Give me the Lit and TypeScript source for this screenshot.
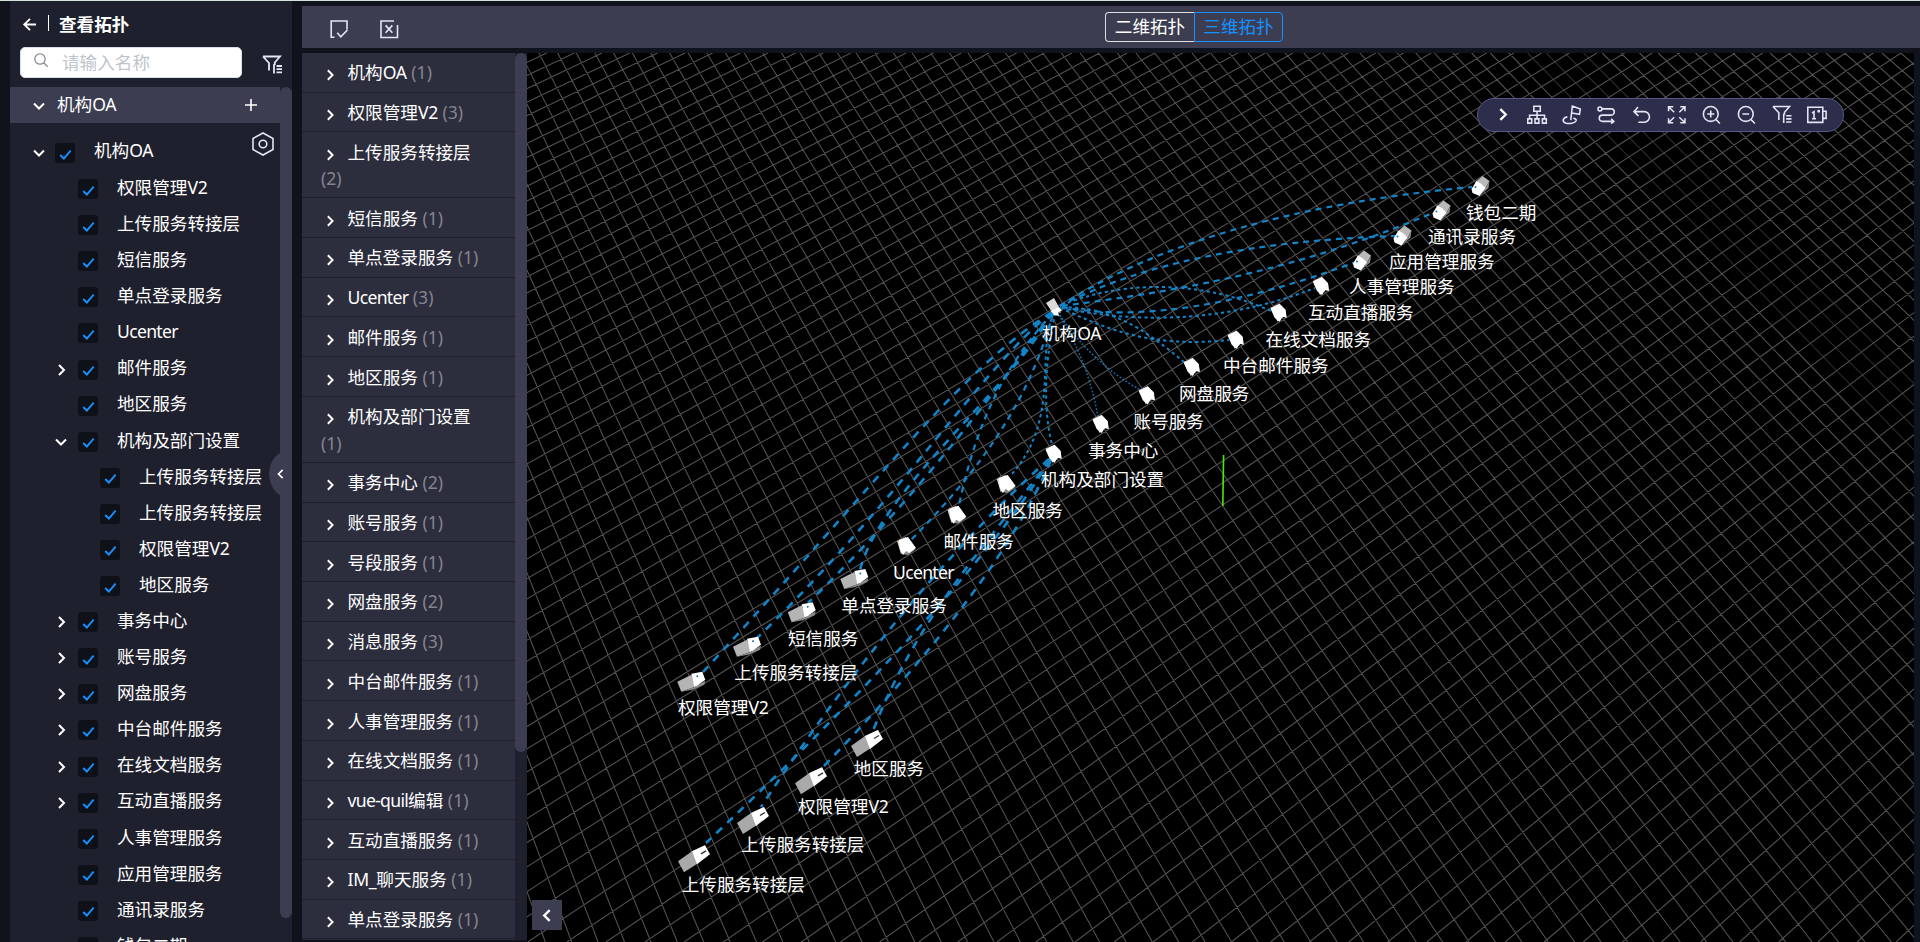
import { LitElement, html, svg, css } from "lit";

const LATIN = /([A-Za-z0-9_\-]+)/;
const label = (t: string) =>
  t.split(LATIN).filter(Boolean).map((p) =>
    LATIN.test(p) ? html`<span class=${/[a-z]/.test(p) ? "lat low" : "lat"}>${p}</span>` : p);
const svgLabel = (t: string) =>
  t.split(LATIN).filter(Boolean).map((p) =>
    LATIN.test(p) ? svg`<tspan class=${/[a-z]/.test(p) ? "low" : "lat"}>${p}</tspan>` : svg`<tspan>${p}</tspan>`);

type Row = { name: string; level: 0 | 1 | 2; open?: boolean };
const TREE: Row[] = [
  { name: "权限管理V2", level: 1 },
  { name: "上传服务转接层", level: 1 },
  { name: "短信服务", level: 1 },
  { name: "单点登录服务", level: 1 },
  { name: "Ucenter", level: 1 },
  { name: "邮件服务", level: 1, open: false },
  { name: "地区服务", level: 1 },
  { name: "机构及部门设置", level: 1, open: true },
  { name: "上传服务转接层", level: 2 },
  { name: "上传服务转接层", level: 2 },
  { name: "权限管理V2", level: 2 },
  { name: "地区服务", level: 2 },
  { name: "事务中心", level: 1, open: false },
  { name: "账号服务", level: 1, open: false },
  { name: "网盘服务", level: 1, open: false },
  { name: "中台邮件服务", level: 1, open: false },
  { name: "在线文档服务", level: 1, open: false },
  { name: "互动直播服务", level: 1, open: false },
  { name: "人事管理服务", level: 1 },
  { name: "应用管理服务", level: 1 },
  { name: "通讯录服务", level: 1 },
  { name: "钱包二期", level: 1 },
];

const GROUPS: [string, number][] = [
  ["机构OA", 1], ["权限管理V2", 3], ["上传服务转接层", 2], ["短信服务", 1],
  ["单点登录服务", 1], ["Ucenter", 3], ["邮件服务", 1], ["地区服务", 1],
  ["机构及部门设置", 1], ["事务中心", 2], ["账号服务", 1], ["号段服务", 1],
  ["网盘服务", 2], ["消息服务", 3], ["中台邮件服务", 1], ["人事管理服务", 1],
  ["在线文档服务", 1], ["vue-quil编辑", 1], ["互动直播服务", 1],
  ["IM_聊天服务", 1], ["单点登录服务", 1],
];

/* Perspective ground grid: both line families share the horizon. */
const VIEW = { x: 527, y: 53, w: 1387, h: 889 };
const CAM = { horizon: -2089.67782, scale: 138.5852, yaw: 0.59378, a0: -79.78982, b0: -91.36246, cx: 1218.54475, focal: 479.55719 };
function gridPaths() {
  const d = Math.hypot(CAM.focal, 497.5 - CAM.horizon);
  const va = CAM.cx - d * Math.tan(CAM.yaw);
  const vb = CAM.cx + d / Math.tan(CAM.yaw);
  const p = CAM.scale * Math.cos(CAM.yaw);
  const s = -CAM.scale * Math.sin(CAM.yaw);
  const y0 = VIEW.y, y1 = VIEW.y + VIEW.h;
  const at = (v: number, k: number, o: number, q: number, y: number) => v + ((k - o) * (y - CAM.horizon)) / q;
  let main = "", faint = "";
  for (let k = -80; k < 130; k++) {
    const seg = `M${at(va, k, CAM.a0, p, y0).toFixed(1)} ${y0}L${at(va, k, CAM.a0, p, y1).toFixed(1)} ${y1}`;
    if (k >= 32 && k <= 35) faint += seg;
    else main += seg;
    main += `M${at(vb, k, CAM.b0, s, y0).toFixed(1)} ${y0}L${at(vb, k, CAM.b0, s, y1).toFixed(1)} ${y1}`;
  }
  return { main, faint };
}
const GRID = gridPaths();

type Shape = { gray: string; mid: string; white: string; shade: string };
const SHAPES: Record<string, Shape> = {
  low: { gray: "-16,3 -2,-7 4,5 -10,14", mid: "-2,-7 11,-13 12,-9 0,-2", white: "-2,-7 11,-13 16,-4 3,6", shade: "#a9a9a9" },
  left: { gray: "-14,0 0,-7 4,5 -10,10", mid: "-10,10 4,5 14,-1 13,3 1,8", white: "0,-8 11,-10 14,-2 6,4 3,5", shade: "#b4b4b4" },
  mid: { gray: "-9,-5 0,-9 3,4 -5,8", mid: "-5,8 3,4 10,3 2,9", white: "-7,-6 2,-9 10,2 3,7 0,5 -3,9 -6,3", shade: "#d6d6d6" },
  steep: { gray: "-8,-5 1,-9 6,3 -1,9", mid: "2,-8 7,-2 8,5 5,4", white: "-8,-4 1,-9 7,-3 8,5 4,4 1,9 -4,5", shade: "#e8e8e8" },
  right: { gray: "-5,-4 2,-10 9,-5 4,4 -2,3", mid: "4,4 9,-5 8,2 -1,10", white: "-9,3 -4,-5 1,-2 5,2 -1,10 -8,7", shade: "#b9b9b9" },
  root: { gray: "-8,-4 0,-9 6,2 -2,5", mid: "5,2 7,6 4,6", white: "-3,4 5,0 8,4 4,5 5,9 0,8", shade: "#d9d9d9" },
};

type Node = [string, string, number, number, number, number];
const NODES: Node[] = [
  ["机构OA", "root", 1054, 307, 1043, 333.3],
  ["钱包二期", "right", 1480.5, 186, 1467, 212.5],
  ["通讯录服务", "right", 1441.5, 210.5, 1429, 237],
  ["应用管理服务", "right", 1402.5, 235.5, 1390, 261.5],
  ["人事管理服务", "right", 1362, 260.5, 1350, 286.5],
  ["互动直播服务", "steep", 1321, 286, 1309, 312.5],
  ["在线文档服务", "steep", 1278.6, 312.7, 1266.5, 339.5],
  ["中台邮件服务", "steep", 1235.7, 339.7, 1224, 366],
  ["网盘服务", "steep", 1191.8, 367, 1180, 394],
  ["账号服务", "steep", 1146.8, 395.3, 1134.5, 422],
  ["事务中心", "steep", 1100.7, 424, 1089, 450.5],
  ["机构及部门设置", "steep", 1053.6, 453.7, 1042, 480],
  ["地区服务", "mid", 1005.7, 484, 993.5, 510.5],
  ["邮件服务", "mid", 956.4, 514.7, 944.5, 541.5],
  ["Ucenter", "mid", 906, 546, 894, 573],
  ["单点登录服务", "left", 854.3, 579, 842.3, 606],
  ["短信服务", "left", 801.7, 612.3, 789, 639],
  ["上传服务转接层", "left", 747, 646.7, 735.3, 673],
  ["权限管理V2", "left", 691.3, 681.7, 679, 708],
  ["地区服务", "low", 867, 743, 854.7, 769],
  ["权限管理V2", "low", 811, 780.3, 799, 807],
  ["上传服务转接层", "low", 753, 820, 742.3, 845],
  ["上传服务转接层", "low", 694, 858.3, 682.7, 885],
];

const EDGES: Record<string, string[]> = {
  wide: [
    "M1052 312C960 370 880 480 703 672",
    "M1052 312C980 370 900 500 755 640",
    "M1052 312C1005 380 915 500 808 603",
    "M1052 312C1020 380 880 490 860 570",
    "M1050 460C990 540 915 620 873 731",
    "M1051 460C1015 545 945 640 823 767",
    "M1049 459C975 525 870 640 761 807",
    "M1050 459C1010 530 900 660 706 843",
  ],
  medium: [
    "M1060 306Q1205 212 1472 187",
    "M1062 306C1150 294 1280 278 1435 212",
    "M1060 306Q1180 243 1396 236",
    "M1062 307C1140 322 1240 305 1356 262",
    "M1053 313C1035 380 1000 450 911 540",
    "M1053 313C1000 370 975 430 959 505",
  ],
  small: [
    "M1062 308C1130 322 1220 325 1315 288",
    "M1062 305C1110 285 1190 275 1271 311",
    "M1060 308C1110 330 1150 348 1229 340",
    "M1062 307C1110 308 1140 325 1185 363",
    "M1055 313C1048 350 1040 400 1053 449",
    "M1054 313C1035 350 1062 420 1010 476",
  ],
  tiny: [
    "M1058 312Q1090 362 1142 391",
    "M1057 312Q1088 360 1098 417",
  ],
};

const CHEVRON = {
  down: "M1 3.5L6 8.5L11 3.5",
  right: "M4 1L9 6L4 11",
  left: "M8 1L3 6L8 11",
};
const chevron = (dir: keyof typeof CHEVRON) =>
  html`<svg class="chev" viewBox="0 0 12 12"><path d=${CHEVRON[dir]} /></svg>`;

const funnel = svg`
  <path d="M1 1.5H18L12.8 7.5V10M1 1.5L7 8V15.5M12 9V18.5" />
  <path d="M14.5 11H20M14.5 14.2H20M14.5 17.4H20" />`;

const TOOLS = [
  svg`<path d="M7 1.2h6.6v5.2H7zM10.3 6.4v4M2.6 14v-3.4h15.4V14M10.3 10v4M.8 14.2h4v4.4h-4zM8.2 14.2h4v4.4h-4zM15.8 14.2h4v4.4h-4z" />`,
  svg`<path d="M9 15.5L10.6 1l8.2 3.2-.9 5.4-7.9-1.4M5.5 12.2C.5 13 0 17 3.5 18.4c4 1.4 10 .2 11-2.2.6-1.6-1.5-2.4-3-2.6" />`,
  svg`<circle cx="3" cy="4" r="2" /><path d="M5 4h9.5a3.2 3.2 0 0 1 0 6.4H5.5a3.2 3.2 0 0 0 0 6.4H17M14.5 14.3l2.8 2.5-2.8 2.3" />`,
  svg`<path d="M6.2 2L2 6.8l4.6 4.4M2 6.8h10.5a5.4 5.4 0 0 1 0 10.8H6.5" />`,
  svg`<path d="M1.6 6.5V1.8h4.8M1.8 2l5.6 5.4M13.6 1.8h4.8v4.7M18.2 2l-5.6 5.4M1.6 13.6v4.7h4.8M1.8 18l5.6-5.4M18.4 13.6v4.7h-4.8M18.2 18l-5.6-5.4" />`,
  svg`<circle cx="9" cy="9.2" r="7.6" /><path d="M5.4 9.2h7.2M9 5.6v7.2M14.4 15l4 4" />`,
  svg`<circle cx="9" cy="9.2" r="7.6" /><path d="M5.6 9.2h6.8M14.4 15l4 4" />`,
  funnel,
  svg`<path d="M.8 2.4h15.4v15.4H.8zM16.2 6.5h3.4v7.2h-3.4M5.2 8.2l2-1.3v7.2M5.2 14.1h4" /><circle cx="12" cy="6.4" r=".7" />`,
];

class CheckBox extends LitElement {
  static styles = css`
    :host { display: grid; place-items: center; width: 20px; height: 20px; border-radius: 3px; background: #0e1118; flex: none; }
    svg { width: 13px; height: 11px; margin-top: 2px; fill: none; stroke: #1890ff; stroke-width: 2.1; }
  `;
  render() {
    return html`<svg viewBox="0 0 14 12"><path d="M1.2 6.6L5.2 10.4L12.6 1.8" /></svg>`;
  }
}
customElements.define("check-box", CheckBox);

class TopologyScene extends LitElement {
  static styles = css`
    :host { display: block; background: #000; overflow: hidden; }
    svg { display: block; width: 100%; height: 100%; }
    .grid { fill: none; stroke: #505050; stroke-width: 1.1; }
    .faint { opacity: 0.55; }
    .edge { fill: none; stroke: #1284c8; }
    .wide { stroke-width: 2.6; stroke-dasharray: 8 7; }
    .medium { stroke-width: 2.2; stroke-dasharray: 6 5; }
    .small { stroke-width: 2; stroke-dasharray: 3.2 3.2; }
    .tiny { stroke-width: 1.5; stroke-dasharray: 1.8 1.8; opacity: 0.85; }
    .axis { stroke: #48f000; stroke-width: 1.6; }
    .white { fill: #fff; }
    .side { fill: #8c8c8c; }
    text { fill: #fff; font: 17.6px "Noto Sans", "Noto Sans CJK SC", sans-serif; }
    .lat { letter-spacing: -0.3px; }
    .low { letter-spacing: -0.7px; }
  `;
  render() {
    return html`<svg viewBox="${VIEW.x} ${VIEW.y} ${VIEW.w} ${VIEW.h}" preserveAspectRatio="xMinYMin slice">
      <path class="grid" d=${GRID.main} />
      <path class="grid faint" d=${GRID.faint} />
      <path class="axis" d="M1223.6 455L1222.8 506" />
      ${Object.entries(EDGES).map(([kind, list]) =>
        list.map((d) => svg`<path class="edge ${kind}" d=${d} />`))}
      ${NODES.map(([, kind, x, y]) => {
        const s = SHAPES[kind];
        return svg`<g transform="translate(${x} ${y})">
          <polygon points=${s.gray} fill=${s.shade} />
          <polygon class="side" points=${s.mid} />
          <polygon class="white" points=${s.white} />
          ${kind === "low" ? svg`<path d="M7 -4.5L12 -7.5" stroke="#333" stroke-width="1.4" />` : ""}
          ${kind === "right" || kind === "left" ? svg`<circle cx=${kind === "left" ? 6 : -5} cy=${kind === "left" ? -5.5 : 1} r="1" fill="#1e6fa8" />` : ""}
        </g>`;
      })}
      ${NODES.map(([name, , , , x, y]) => svg`<text x=${x - 1} y=${y + 6.2}>${svgLabel(name)}</text>`)}
    </svg>`;
  }
}
customElements.define("topology-scene", TopologyScene);

class AppRoot extends LitElement {
  static styles = css`
    :host {
      display: flex; box-sizing: border-box; width: 100vw; height: 100vh; overflow: hidden;
      background: #10131b; border-top: 1px solid #d5e3df; padding-left: 10px; gap: 10px;
      font: 17.6px/26.4px "Noto Sans", "Noto Sans CJK SC", sans-serif; color: #fff;
    }
    * { box-sizing: border-box; }
    .lat { letter-spacing: -0.3px; }
    .low { letter-spacing: -0.7px; }
    svg { display: block; fill: none; stroke: #e4e6f5; stroke-width: 1.6; overflow: visible; }
    .chev { width: 12px; height: 12px; stroke: #fff; stroke-width: 2; flex: none; }

    .side { width: 282px; flex: none; background: #1f202d; display: flex; flex-direction: column; position: relative; }
    .head { display: flex; align-items: center; height: 46px; padding: 0 0 9px 13px; }
    .back { width: 13px; height: 13px; stroke: #fff; stroke-width: 1.8; margin-top: 10px; }
    .rule { width: 1px; height: 16px; background: #fff; margin: 7px 0 0 12px; }
    .title { margin: 10px 0 0 10px; font-weight: 700; }
    .find { display: flex; align-items: center; height: 30px; padding: 0 10px; gap: 20px; }
    .box { display: flex; align-items: center; width: 222px; height: 31px; border: 1px solid #dcdfe6; border-radius: 5px; background: #fff; padding-left: 13px; gap: 14px; color: #c0c4cc; }
    .box svg { width: 14px; height: 14px; stroke: #8a8d94; stroke-width: 1.3; margin-top: -4px; }
    .find .funnel { width: 20px; height: 20px; margin-top: 6px; stroke-width: 1.8; }
    .tree { display: flex; flex: 1; min-height: 0; margin-top: 10px; }
    .rows { width: 270px; overflow: hidden; }
    .rail { flex: 1; }
    .thumb { background: #3c3d51; border-radius: 6px; }
    .side .thumb { height: 831px; }
    .root { display: flex; align-items: center; height: 36px; background: #3c3d51; padding: 2px 23px 0 23px; }
    .root .name { flex: 1; margin: -4px 0 0 12px; }
    .plus { width: 12px; height: 12px; stroke: #fff; margin-top: -2px; }
    .row { display: flex; align-items: center; height: 36.1px; }
    .row .name { margin: -4px 0 0 19px; white-space: nowrap; }
    .row .slot { width: 12px; flex: none; margin-right: 10px; }
    .l0 { height: 36px; margin-top: 12px; padding-left: 23px; }
    .l0 .name { flex: 1; margin-top: -5px; }
    .l0 .hex { width: 22px; height: 24px; margin: -19px 6px 0 0; }
    .l1 { padding-left: 46px; }
    .l1 .chev { margin-left: -1px; }
    .l2 { padding-left: 68px; }
    .fold { position: absolute; left: 259px; top: 448px; width: 23px; height: 50px; border-radius: 23px 0 0 23px / 25px 0 0 25px; background: #3c3d51; display: grid; place-items: center; }
    .fold .chev { width: 10px; height: 10px; }

    .main { flex: 1; min-width: 0; display: flex; flex-direction: column; padding-top: 5px; }
    .bar { height: 42px; background: #3c3d51; display: flex; align-items: center; padding-left: 28px; }
    .bar .act { width: 18px; height: 18px; margin: 4px 32px 0 0; stroke-width: 1.6; }
    .seg { display: flex; margin-left: 675px; height: 30px; line-height: 26px; margin-top: 0; }
    .seg span { width: 89px; border: 1px solid #dcdfe6; border-radius: 4px 0 0 4px; text-align: center; border-right: 0; }
    .seg .on { border: 1px solid #1890ff; color: #1890ff; border-radius: 0 4px 4px 0; }
    .body { flex: 1; min-height: 0; display: flex; margin-top: 5px; position: relative; }
    .list { width: 213px; height: 887px; overflow: hidden; background: #2c2d3d; }
    .item { min-height: 39.72px; padding: 6.4px 26px 5.7px 19px; border-bottom: 1px solid #1e1f2b; line-height: 26.4px; }
    .item .chev { display: inline-block; vertical-align: -2px; margin: 0 12.5px 0 -0.5px; width: 11.5px; }
    .item .pad { display: inline-block; width: 3px; }
    .item .n { color: #85868d; }
    .rail2 { width: 12px; background: #1f202d; height: 887px; }
    .rail2 .thumb { height: 699px; }
    topology-scene { width: 1387px; }
    .tools { position: absolute; left: 1175px; top: 45px; width: 367px; height: 34px; border: 1px solid #555884; border-radius: 17px; background: #2c2e4b; display: flex; align-items: center; padding-left: 16px; }
    .tools .cell { width: 35px; display: grid; place-items: center; margin-top: -1px; }
    .tools .cell svg { width: 19.5px; height: 19.5px; stroke-width: 1.6; }
    .tools .cell .chev { width: 13px; height: 13px; stroke-width: 2.2; }
    .tools .cell:first-child { width: 16px; margin-right: 9.5px; }
    .mini { position: absolute; left: 230px; top: 847px; width: 30px; height: 30px; background: #3c3d51; display: grid; place-items: center; }
    .mini .chev { width: 13px; height: 13px; stroke-width: 2.2; }
  `;

  private row(r: Row) {
    return html`<div class="row l${r.level}">
      <span class="slot">${r.open === undefined ? "" : chevron(r.open ? "down" : "right")}</span>
      <check-box></check-box><span class="name">${label(r.name)}</span>
    </div>`;
  }

  render() {
    return html`
      <aside class="side">
        <div class="head">
          <svg class="back" viewBox="0 0 13 13"><path d="M7 .8L1.2 6.5L7 12.2M1.2 6.5H13" /></svg>
          <span class="rule"></span><span class="title">查看拓扑</span>
        </div>
        <div class="find">
          <div class="box">
            <svg viewBox="0 0 14 14"><circle cx="6" cy="6" r="5.2" /><path d="M9.8 9.8L13.6 13.8" /></svg>
            <span>请输入名称</span>
          </div>
          <svg class="funnel" viewBox="0 0 20 20">${funnel}</svg>
        </div>
        <div class="tree">
          <div class="rows">
            <div class="root">${chevron("down")}<span class="name">${label("机构OA")}</span>
              <svg class="plus" viewBox="0 0 12 12"><path d="M6 0V12M0 6H12" /></svg>
            </div>
            <div class="row l0">
              <span class="slot">${chevron("down")}</span><check-box></check-box>
              <span class="name">${label("机构OA")}</span>
              <svg class="hex" viewBox="0 0 22 24"><path d="M11 1L21 6.5V17.5L11 23L1 17.5V6.5Z" /><circle cx="11" cy="12" r="3.8" /></svg>
            </div>
            ${TREE.map((r) => this.row(r))}
          </div>
          <div class="rail"><div class="thumb"></div></div>
        </div>
        <div class="fold">${chevron("left")}</div>
      </aside>
      <main class="main">
        <div class="bar">
          <svg class="act" viewBox="0 0 18 18"><path d="M4.5 17.2H1.2V1H17v8.5M7.2 12.8l3.6 4L17.4 10" /></svg>
          <svg class="act" viewBox="0 0 18 18"><path d="M14 1H1V17.5H17.5V5M5.6 5.4l6.8 7.4M12.4 5.4l-6.8 7.4" /></svg>
          <div class="seg"><span>二维拓扑</span><span class="on">三维拓扑</span></div>
        </div>
        <div class="body">
          <div class="list">
            ${GROUPS.map(([n, c]) => html`<div class="item"><span class="pad"></span>${chevron("right")}${label(n)} <span class="n">(${c})</span></div>`)}
          </div>
          <div class="rail2"><div class="thumb"></div></div>
          <topology-scene></topology-scene>
          <div class="tools">
            <span class="cell">${chevron("right")}</span>
            ${TOOLS.map((t) => html`<span class="cell"><svg viewBox="0 0 20 20">${t}</svg></span>`)}
          </div>
          <div class="mini">${chevron("left")}</div>
        </div>
      </main>
    `;
  }
}
customElements.define("app-root", AppRoot);
